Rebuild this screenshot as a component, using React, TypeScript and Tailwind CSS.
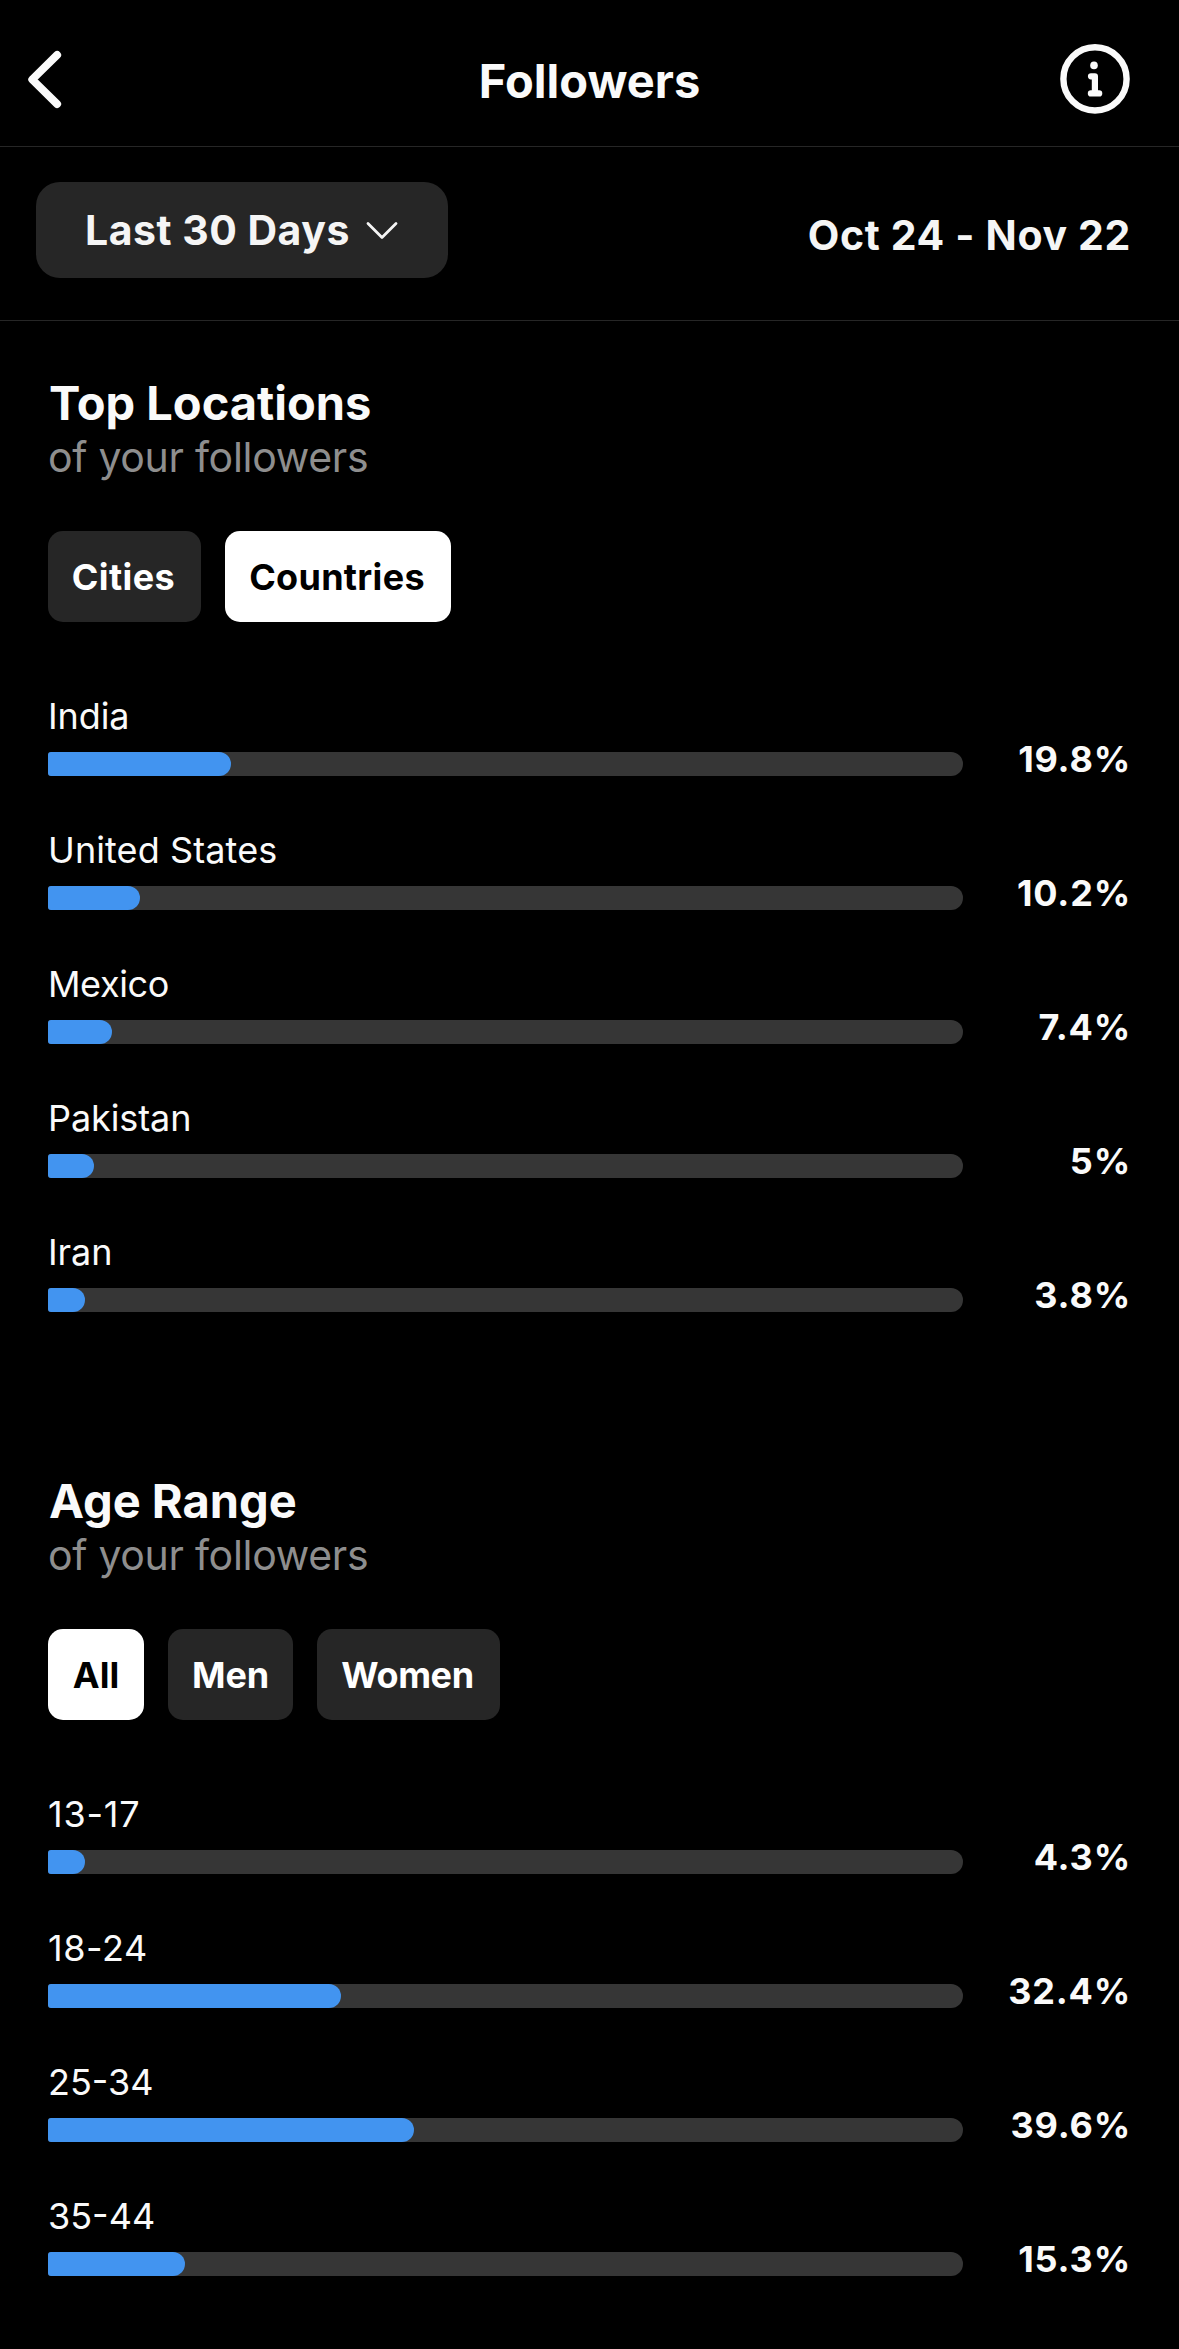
import React, { useState } from 'react';

interface Tab {
  label: string;
  className: string;
}

interface Row {
  label: string;
  value: number;
  className?: string;
}

const LOCATION_TABS: Tab[] = [
  { label: 'Cities', className: 'w-[153px] pr-2 tracking-[0.4px]' },
  { label: 'Countries', className: 'w-[226px] pr-2 tracking-[0.3px]' },
];

const AGE_TABS: Tab[] = [
  { label: 'All', className: 'w-24 pr-1.5' },
  { label: 'Men', className: 'w-[125px] pr-1.5 tracking-[-0.2px]' },
  { label: 'Women', className: 'w-[183px] pr-2 tracking-[-0.4px]' },
];

const COUNTRIES: Row[] = [
  { label: 'India', value: 19.8, className: 'tracking-[-0.1px]' },
  { label: 'United States', value: 10.2, className: 'tracking-[0.1px]' },
  { label: 'Mexico', value: 7.4, className: 'tracking-[-0.4px]' },
  { label: 'Pakistan', value: 5, className: 'tracking-[-0.1px]' },
  { label: 'Iran', value: 3.8, className: 'tracking-[-0.1px]' },
];

const AGES: Row[] = [
  { label: '13-17', value: 4.3, className: 'tracking-[0.8px]' },
  { label: '18-24', value: 32.4, className: 'tracking-[0.6px]' },
  { label: '25-34', value: 39.6 },
  { label: '35-44', value: 15.3 },
];

const Header: React.FC = () => (
  <header className="grid grid-cols-3 items-center h-[147px] pt-3 pl-6 pr-12 border-b border-[#262626]">
    <button aria-label="Back" className="justify-self-start">
      <svg width="40" height="60" viewBox="0 0 40 60" fill="none" stroke="currentColor" strokeWidth="7.8" strokeLinecap="round" strokeLinejoin="round">
        <path d="M33.2 5.9 8.2 30.5 33.2 55.1" />
      </svg>
    </button>
    <h1 className="justify-self-center pt-0.5 pl-6 text-[47px] leading-none font-bold">Followers</h1>
    <button aria-label="Info" className="justify-self-end">
      <svg width="72" height="72" viewBox="0 0 72 72" fill="none" stroke="currentColor" strokeLinecap="round" strokeLinejoin="round">
        <circle cx="36" cy="35.9" r="31.6" strokeWidth="6.4" />
        <circle cx="35" cy="22.4" r="3.8" fill="currentColor" stroke="none" />
        <path d="M32 33.3h3.9v17.1M31.9 50.4h8.3" strokeWidth="6.2" />
      </svg>
    </button>
  </header>
);

const FilterBar: React.FC = () => (
  <div className="flex items-start justify-between h-[174px] pt-[35px] pl-9 pr-12 border-b border-[#262626] text-[41px] font-bold text-[#f5f5f5]">
    <button className="flex items-center justify-between w-[412px] h-24 pl-[49px] pr-12 rounded-[24px] bg-[#262626]">
      <span className="pt-0.5 tracking-[0.5px] whitespace-nowrap">Last 30 Days</span>
      <svg width="36" height="24" viewBox="0 0 36 24" fill="none" stroke="currentColor" strokeWidth="2.8" strokeLinecap="round" strokeLinejoin="round">
        <path d="M4 5.6l14 13.8L32 5.6" />
      </svg>
    </button>
    <span className="leading-[107px] tracking-[0.65px]">Oct 24 - Nov 22</span>
  </div>
);

const BarRow: React.FC<Row> = ({ label, value, className = '' }) => (
  <div>
    <div className={`text-[36px] leading-[44px] ${className}`}>{label}</div>
    <div className="flex items-center justify-between h-6 mt-[14px]">
      <div className="w-[915px] h-6 rounded-l-[3px] rounded-r-[12px] bg-[#363636] overflow-hidden">
        <div className="h-full rounded-r-[12px] bg-[#4294f0]" style={{ width: `${Math.round(value)}%` }}></div>
      </div>
      <span className="-mt-[10px] text-[36px] leading-6 font-bold tracking-[0.8px] text-[#fafafa]">{value}%</span>
    </div>
  </div>
);

interface SectionProps {
  title: string;
  tabs: Tab[];
  initialTab: string;
  rows: Row[];
}

const Section: React.FC<SectionProps> = ({ title, tabs, initialTab, rows }) => {
  const [active, setActive] = useState(initialTab);

  return (
    <section>
      <h2 className="pl-px text-[47px] leading-[54px] font-bold text-[#fafafa]">{title}</h2>
      <p className="text-[41px] leading-[54px] tracking-[-0.3px] text-[#8e8e8e]">of your followers</p>
      <div className="flex gap-6 mt-[47px]">
        {tabs.map((tab) => (
          <button
            key={tab.label}
            onClick={() => setActive(tab.label)}
            className={`h-[91px] pl-1.5 rounded-[15px] text-[36px] font-bold ${tab.className} ${
              active === tab.label ? 'bg-white text-black' : 'bg-[#262626] text-white'
            }`}
          >
            {tab.label}
          </button>
        ))}
      </div>
      <div className="flex flex-col gap-[52px] mt-[72px]">
        {rows.map((row) => (
          <BarRow key={row.label} {...row} />
        ))}
      </div>
    </section>
  );
};

export default function App() {
  return (
    <div className="min-h-screen bg-black text-[#fafafa] font-['Inter',sans-serif]">
      <Header />
      <FilterBar />
      <main className="flex flex-col gap-[162px] px-12 pt-[55px]">
        <Section title="Top Locations" tabs={LOCATION_TABS} initialTab="Countries" rows={COUNTRIES} />
        <Section title="Age Range" tabs={AGE_TABS} initialTab="All" rows={AGES} />
      </main>
    </div>
  );
}
